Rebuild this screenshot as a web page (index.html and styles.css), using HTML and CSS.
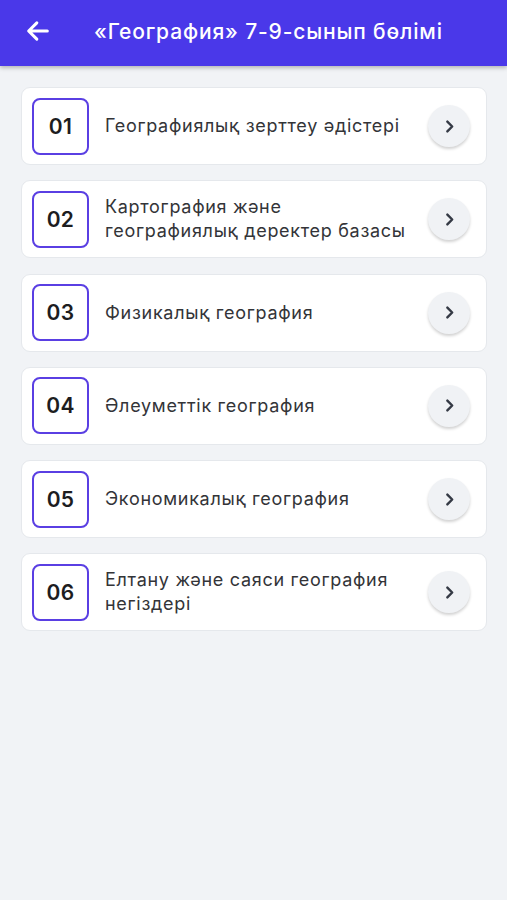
FILE: index.html
```html
<!DOCTYPE html>
<html lang="kk">
<head>
<meta charset="utf-8">
<link rel="stylesheet" href="styles.css">
</head>
<body>
<header class="topbar">
  <svg class="back" width="28" height="28" viewBox="0 0 24 24" fill="none" stroke="#fff" stroke-width="2.6" stroke-linecap="round" stroke-linejoin="round"><path d="M20 12H4.5M11 5l-7 7 7 7"/></svg>
  <h1 class="title">«География» 7-9-сынып бөлімі</h1>
</header>
<main class="list">
  <div class="card"><div class="num">01</div><div class="label">Географиялық зерттеу әдістері</div><div class="go"><svg width="15" height="15" viewBox="0 0 14 14" fill="none" stroke="#353a45" stroke-width="2.3" stroke-linecap="round" stroke-linejoin="round"><path d="M5 2.5l4.5 4.5L5 11.5"/></svg></div></div>
  <div class="card"><div class="num">02</div><div class="label">Картография және географиялық деректер базасы</div><div class="go"><svg width="15" height="15" viewBox="0 0 14 14" fill="none" stroke="#353a45" stroke-width="2.3" stroke-linecap="round" stroke-linejoin="round"><path d="M5 2.5l4.5 4.5L5 11.5"/></svg></div></div>
  <div class="card"><div class="num">03</div><div class="label">Физикалық география</div><div class="go"><svg width="15" height="15" viewBox="0 0 14 14" fill="none" stroke="#353a45" stroke-width="2.3" stroke-linecap="round" stroke-linejoin="round"><path d="M5 2.5l4.5 4.5L5 11.5"/></svg></div></div>
  <div class="card"><div class="num">04</div><div class="label">Әлеуметтік география</div><div class="go"><svg width="15" height="15" viewBox="0 0 14 14" fill="none" stroke="#353a45" stroke-width="2.3" stroke-linecap="round" stroke-linejoin="round"><path d="M5 2.5l4.5 4.5L5 11.5"/></svg></div></div>
  <div class="card"><div class="num">05</div><div class="label">Экономикалық география</div><div class="go"><svg width="15" height="15" viewBox="0 0 14 14" fill="none" stroke="#353a45" stroke-width="2.3" stroke-linecap="round" stroke-linejoin="round"><path d="M5 2.5l4.5 4.5L5 11.5"/></svg></div></div>
  <div class="card"><div class="num">06</div><div class="label">Елтану және саяси география негіздері</div><div class="go"><svg width="15" height="15" viewBox="0 0 14 14" fill="none" stroke="#353a45" stroke-width="2.3" stroke-linecap="round" stroke-linejoin="round"><path d="M5 2.5l4.5 4.5L5 11.5"/></svg></div></div>
</main>
</body>
</html>
```
FILE: styles.css
```css
* { box-sizing: border-box; }
html, body { margin: 0; padding: 0; }
body {
  background: #f1f3f6;
  font-family: Inter, "Noto Sans", sans-serif;
  width: 507px;
  min-height: 900px;
}
.topbar {
  height: 66px;
  background: #4a38e9;
  display: flex;
  align-items: center;
  padding: 0 0 4px 24px;
  box-shadow: 0 2px 4px rgba(0,0,0,0.25);
  position: relative;
}
.back { flex: none; }
.title {
  margin: 0 0 0 42px;
  font-size: 21px;
  font-weight: 500;
  color: #fff;
  letter-spacing: 0.85px;
}
.list {
  padding: 21px 20px 0 21px;
  display: flex;
  flex-direction: column;
  gap: 15.3px;
}
.card {
  height: 78px;
  background: #fff;
  border: 1px solid #e5e8ec;
  border-radius: 9px;
  display: flex;
  align-items: center;
  padding: 0 16px 0 10px;
}
.num {
  flex: none;
  width: 57px;
  height: 57px;
  border: 2px solid #5a3fe3;
  border-radius: 8px;
  display: flex;
  align-items: center;
  justify-content: center;
  font-size: 21px;
  font-weight: 600;
  color: #1d1d1f;
  letter-spacing: 0.3px;
}
.label {
  flex: 1;
  margin-left: 16px;
  font-size: 18px;
  line-height: 24px;
  color: #333438;
  letter-spacing: 0.7px;
  padding-right: 14px;
}
.go {
  flex: none;
  width: 42px;
  height: 42px;
  border-radius: 50%;
  background: #f0f2f5;
  box-shadow: 0 2px 3px rgba(0,0,0,0.18);
  display: flex;
  align-items: center;
  justify-content: center;
}
```
